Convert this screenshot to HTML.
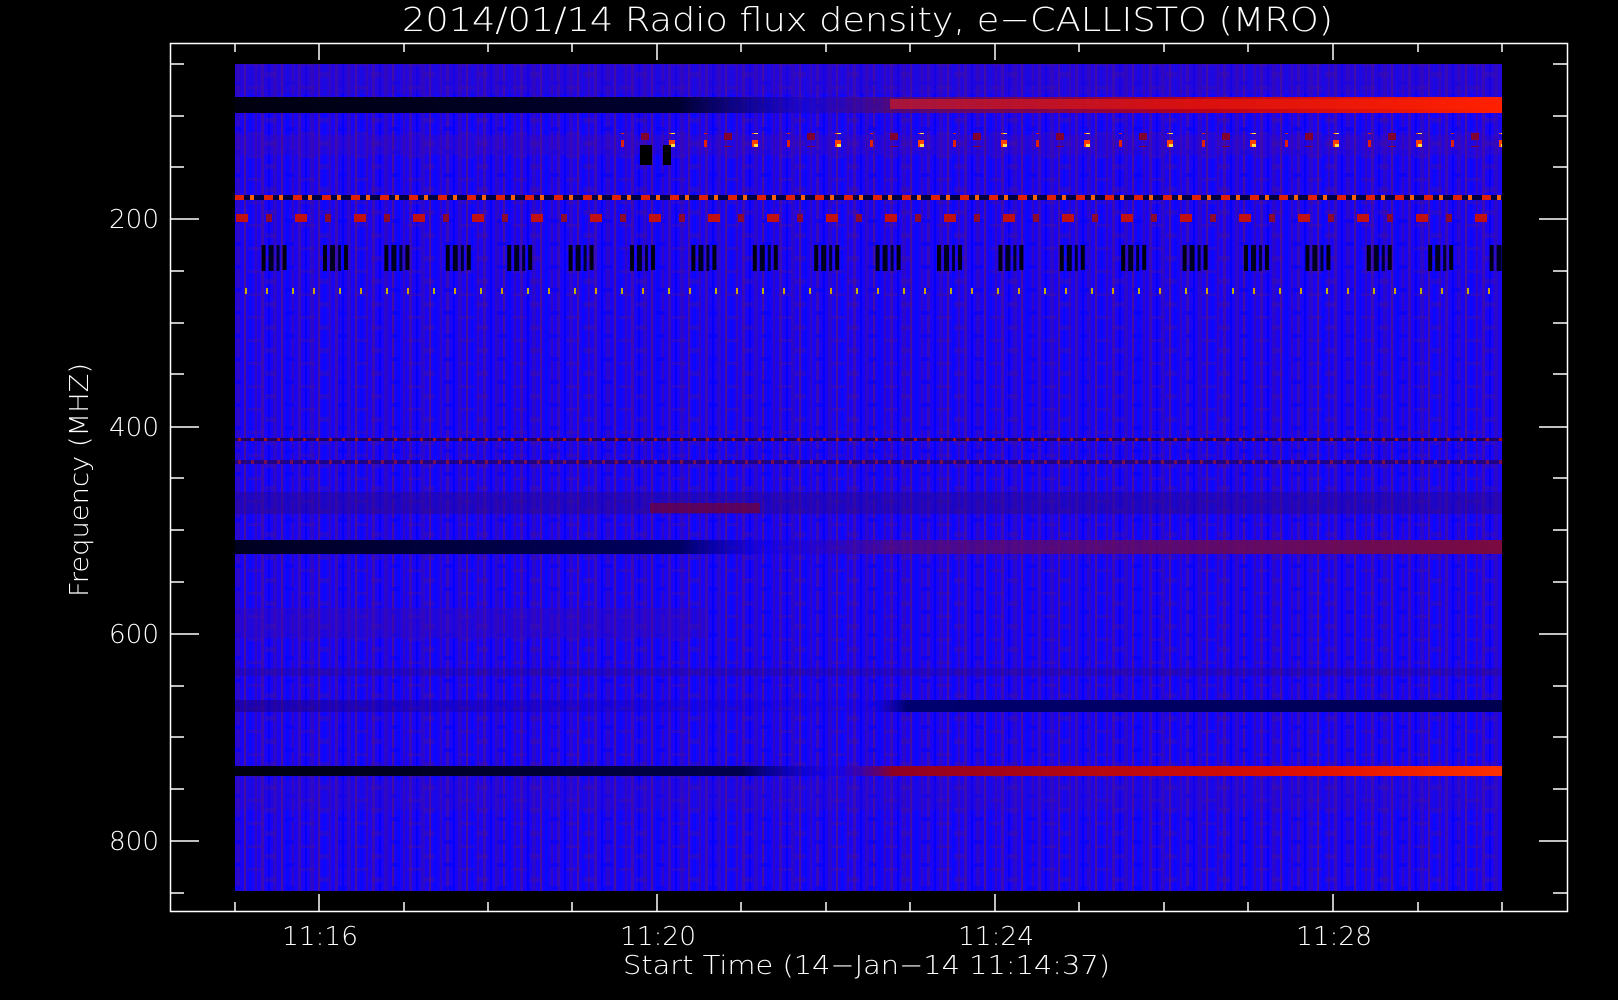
<!DOCTYPE html>
<html><head><meta charset="utf-8"><style>
html,body{margin:0;padding:0;background:#000;width:1618px;height:1000px;overflow:hidden}
svg{display:block}
text{font-family:"DejaVu Sans","Liberation Sans",sans-serif;fill:#fff;font-weight:200}
</style></head><body>
<svg width="1618" height="1000" viewBox="0 0 1618 1000" xmlns="http://www.w3.org/2000/svg">
<defs>
<pattern id="n1" width="37" height="900" patternUnits="userSpaceOnUse">
<rect width="37" height="900" fill="#1a04f2"/>
<rect x="2" width="3" height="900" fill="#3a0cb4"/>
<rect x="9" width="2" height="900" fill="#0000ff"/>
<rect x="14" width="4" height="900" fill="#2c08c8"/>
<rect x="22" width="2" height="900" fill="#44109e"/>
<rect x="27" width="3" height="900" fill="#0808ff"/>
<rect x="33" width="2" height="900" fill="#3008c0"/>
</pattern>
<pattern id="n2" width="53" height="23" patternUnits="userSpaceOnUse">
<rect x="0" y="3" width="11" height="5" fill="#4a1090" opacity="0.35"/>
<rect x="20" y="12" width="9" height="4" fill="#0000ff" opacity="0.5"/>
<rect x="36" y="17" width="14" height="3" fill="#4a1090" opacity="0.35"/>
</pattern>
<linearGradient id="topDark" x1="0" x2="1">
<stop offset="0" stop-color="#000010"/><stop offset="0.35" stop-color="#000030"/><stop offset="0.45" stop-color="#1a06c0" stop-opacity="0.6"/><stop offset="0.52" stop-color="#5a0a60" stop-opacity="0.8"/><stop offset="0.75" stop-color="#b00020"/><stop offset="1" stop-color="#ff2000"/>
</linearGradient>
<linearGradient id="midDark" x1="0" x2="1">
<stop offset="0" stop-color="#000020"/><stop offset="0.35" stop-color="#000060"/><stop offset="0.42" stop-color="#1000e0" stop-opacity="0.4"/><stop offset="0.52" stop-color="#5a0a70" stop-opacity="0.7"/><stop offset="1" stop-color="#7a0a40"/>
</linearGradient>
<linearGradient id="lowDark" x1="0" x2="1">
<stop offset="0" stop-color="#000010"/><stop offset="0.4" stop-color="#000050"/><stop offset="0.47" stop-color="#1000e0" stop-opacity="0.3"/><stop offset="0.52" stop-color="#900020"/><stop offset="0.85" stop-color="#e01000"/><stop offset="1" stop-color="#ff3000"/>
</linearGradient>
<linearGradient id="band700" x1="0" x2="1">
<stop offset="0" stop-color="#200080" stop-opacity="0.6"/><stop offset="0.5" stop-color="#1000e0" stop-opacity="0.2"/><stop offset="0.53" stop-color="#000070"/><stop offset="1" stop-color="#000050"/>
</linearGradient>
<pattern id="dots" width="29" height="6" patternUnits="userSpaceOnUse">
<rect width="29" height="6" fill="#000040"/>
<rect x="3" width="9" height="6" fill="#e02000"/>
<rect x="18" width="4" height="6" fill="#ff6000"/>
</pattern>
<pattern id="dots2" width="59" height="8" patternUnits="userSpaceOnUse">
<rect x="0" width="12" height="8" fill="#c01010"/>
<rect x="30" width="6" height="8" fill="#8a0a30"/>
</pattern>
<pattern id="bursts" width="61.4" height="40" patternUnits="userSpaceOnUse">
<rect x="16" width="4" height="40" fill="#000010"/>
<rect x="23" width="5" height="40" fill="#000020"/>
<rect x="31" width="3" height="40" fill="#000030"/>
<rect x="37" width="4" height="30" fill="#000010"/>
</pattern>
<pattern id="yel" width="47" height="6" patternUnits="userSpaceOnUse">
<rect x="10" width="2" height="6" fill="#c0b000"/>
<rect x="31" width="2" height="6" fill="#d0a000"/>
</pattern>
<pattern id="orange" width="83" height="14" patternUnits="userSpaceOnUse">
<rect x="5" width="6" height="8" fill="#ff4000"/>
<rect x="7" y="4" width="4" height="4" fill="#ffe040"/>
<rect x="40" width="3" height="8" fill="#e02000"/>
<rect x="60" y="6" width="8" height="8" fill="#800030"/>
</pattern>
<pattern id="thin" width="13" height="3" patternUnits="userSpaceOnUse">
<rect width="13" height="3" fill="#200060"/>
<rect x="4" width="3" height="3" fill="#a01010"/>
</pattern>
</defs>

<rect x="235" y="64" width="1267" height="827" fill="url(#n1)"/>
<rect x="235" y="64" width="1267" height="827" fill="url(#n2)"/>
<rect x="235" y="64" width="1267" height="30" fill="#3a0cb0" opacity="0.35"/>
<rect x="235" y="97" width="1267" height="16" fill="url(#topDark)"/>
<rect x="890" y="99" width="612" height="10" fill="#ff2000" opacity="0.5"/>
<rect x="235" y="135" width="1267" height="20" fill="#4a0ca0" opacity="0.3"/>
<rect x="600" y="133" width="902" height="14" fill="url(#orange)"/>
<rect x="640" y="145" width="12" height="20" fill="#000"/>
<rect x="663" y="145" width="8" height="20" fill="#000"/>
<rect x="235" y="195" width="1267" height="5" fill="url(#dots)"/>
<rect x="235" y="214" width="1267" height="8" fill="url(#dots2)"/>
<rect x="235" y="245" width="1267" height="26" fill="url(#bursts)"/>
<rect x="235" y="288" width="1267" height="6" fill="url(#yel)"/>
<rect x="235" y="438" width="1267" height="3" fill="url(#thin)"/>
<rect x="235" y="460" width="1267" height="4" fill="url(#thin)" opacity="0.7"/>
<rect x="235" y="492" width="1267" height="22" fill="#2a0690" opacity="0.5"/>
<rect x="650" y="503" width="110" height="10" fill="#800020" opacity="0.6"/>
<rect x="235" y="540" width="1267" height="14" fill="url(#midDark)"/>
<rect x="235" y="608" width="470" height="30" fill="#3a0ab0" opacity="0.4"/>
<rect x="235" y="668" width="1267" height="8" fill="#2a0890" opacity="0.4"/>
<rect x="235" y="700" width="1267" height="12" fill="url(#band700)"/>
<rect x="235" y="766" width="1267" height="10" fill="url(#lowDark)"/>
<rect x="235" y="780" width="1267" height="30" fill="#3a0ab0" opacity="0.25"/>

<rect x="170.5" y="43.5" width="1397" height="868" fill="none" stroke="#fff" stroke-width="1.5"/>
<g stroke="#fff" stroke-width="1.5">
<line x1="170" y1="64" x2="184" y2="64"/>
<line x1="170" y1="116" x2="184" y2="116"/>
<line x1="170" y1="167" x2="184" y2="167"/>
<line x1="170" y1="219" x2="199" y2="219"/>
<line x1="170" y1="271" x2="184" y2="271"/>
<line x1="170" y1="323" x2="184" y2="323"/>
<line x1="170" y1="374" x2="184" y2="374"/>
<line x1="170" y1="427" x2="199" y2="427"/>
<line x1="170" y1="478" x2="184" y2="478"/>
<line x1="170" y1="530" x2="184" y2="530"/>
<line x1="170" y1="582" x2="184" y2="582"/>
<line x1="170" y1="634" x2="199" y2="634"/>
<line x1="170" y1="686" x2="184" y2="686"/>
<line x1="170" y1="737" x2="184" y2="737"/>
<line x1="170" y1="789" x2="184" y2="789"/>
<line x1="170" y1="841" x2="199" y2="841"/>
<line x1="170" y1="893" x2="184" y2="893"/>
<line x1="1567" y1="64" x2="1553" y2="64"/>
<line x1="1567" y1="116" x2="1553" y2="116"/>
<line x1="1567" y1="167" x2="1553" y2="167"/>
<line x1="1567" y1="219" x2="1539" y2="219"/>
<line x1="1567" y1="271" x2="1553" y2="271"/>
<line x1="1567" y1="323" x2="1553" y2="323"/>
<line x1="1567" y1="374" x2="1553" y2="374"/>
<line x1="1567" y1="427" x2="1539" y2="427"/>
<line x1="1567" y1="478" x2="1553" y2="478"/>
<line x1="1567" y1="530" x2="1553" y2="530"/>
<line x1="1567" y1="582" x2="1553" y2="582"/>
<line x1="1567" y1="634" x2="1539" y2="634"/>
<line x1="1567" y1="686" x2="1553" y2="686"/>
<line x1="1567" y1="737" x2="1553" y2="737"/>
<line x1="1567" y1="789" x2="1553" y2="789"/>
<line x1="1567" y1="841" x2="1539" y2="841"/>
<line x1="1567" y1="893" x2="1553" y2="893"/>
<line x1="235" y1="911" x2="235" y2="902"/>
<line x1="319" y1="911" x2="319" y2="894"/>
<line x1="404" y1="911" x2="404" y2="902"/>
<line x1="488" y1="911" x2="488" y2="902"/>
<line x1="572" y1="911" x2="572" y2="902"/>
<line x1="657" y1="911" x2="657" y2="894"/>
<line x1="741" y1="911" x2="741" y2="902"/>
<line x1="826" y1="911" x2="826" y2="902"/>
<line x1="910" y1="911" x2="910" y2="902"/>
<line x1="995" y1="911" x2="995" y2="894"/>
<line x1="1079" y1="911" x2="1079" y2="902"/>
<line x1="1164" y1="911" x2="1164" y2="902"/>
<line x1="1248" y1="911" x2="1248" y2="902"/>
<line x1="1333" y1="911" x2="1333" y2="894"/>
<line x1="1418" y1="911" x2="1418" y2="902"/>
<line x1="1502" y1="911" x2="1502" y2="902"/>
<line x1="235" y1="43" x2="235" y2="52"/>
<line x1="319" y1="43" x2="319" y2="60"/>
<line x1="404" y1="43" x2="404" y2="52"/>
<line x1="488" y1="43" x2="488" y2="52"/>
<line x1="572" y1="43" x2="572" y2="52"/>
<line x1="657" y1="43" x2="657" y2="60"/>
<line x1="741" y1="43" x2="741" y2="52"/>
<line x1="826" y1="43" x2="826" y2="52"/>
<line x1="910" y1="43" x2="910" y2="52"/>
<line x1="995" y1="43" x2="995" y2="60"/>
<line x1="1079" y1="43" x2="1079" y2="52"/>
<line x1="1164" y1="43" x2="1164" y2="52"/>
<line x1="1248" y1="43" x2="1248" y2="52"/>
<line x1="1333" y1="43" x2="1333" y2="60"/>
<line x1="1418" y1="43" x2="1418" y2="52"/>
<line x1="1502" y1="43" x2="1502" y2="52"/>
</g>

<text x="402" y="31" font-size="33" textLength="931" lengthAdjust="spacingAndGlyphs">2014/01/14  Radio flux density, e−CALLISTO (MRO)</text>
<g font-size="26">
<text x="159" y="228" text-anchor="end" textLength="50" lengthAdjust="spacingAndGlyphs">200</text>
<text x="159" y="436" text-anchor="end" textLength="50" lengthAdjust="spacingAndGlyphs">400</text>
<text x="159" y="643" text-anchor="end" textLength="50" lengthAdjust="spacingAndGlyphs">600</text>
<text x="159" y="850" text-anchor="end" textLength="50" lengthAdjust="spacingAndGlyphs">800</text>
<text x="282" y="945" textLength="76" lengthAdjust="spacingAndGlyphs">11:16</text>
<text x="620" y="945" textLength="76" lengthAdjust="spacingAndGlyphs">11:20</text>
<text x="958" y="945" textLength="76" lengthAdjust="spacingAndGlyphs">11:24</text>
<text x="1296" y="945" textLength="76" lengthAdjust="spacingAndGlyphs">11:28</text>
<text x="623" y="974" textLength="487" lengthAdjust="spacingAndGlyphs">Start Time (14−Jan−14 11:14:37)</text>
<text transform="translate(88,597) rotate(-90)" x="0" y="0" textLength="234" lengthAdjust="spacingAndGlyphs">Frequency (MHZ)</text>
</g>
</svg>
</body></html>
